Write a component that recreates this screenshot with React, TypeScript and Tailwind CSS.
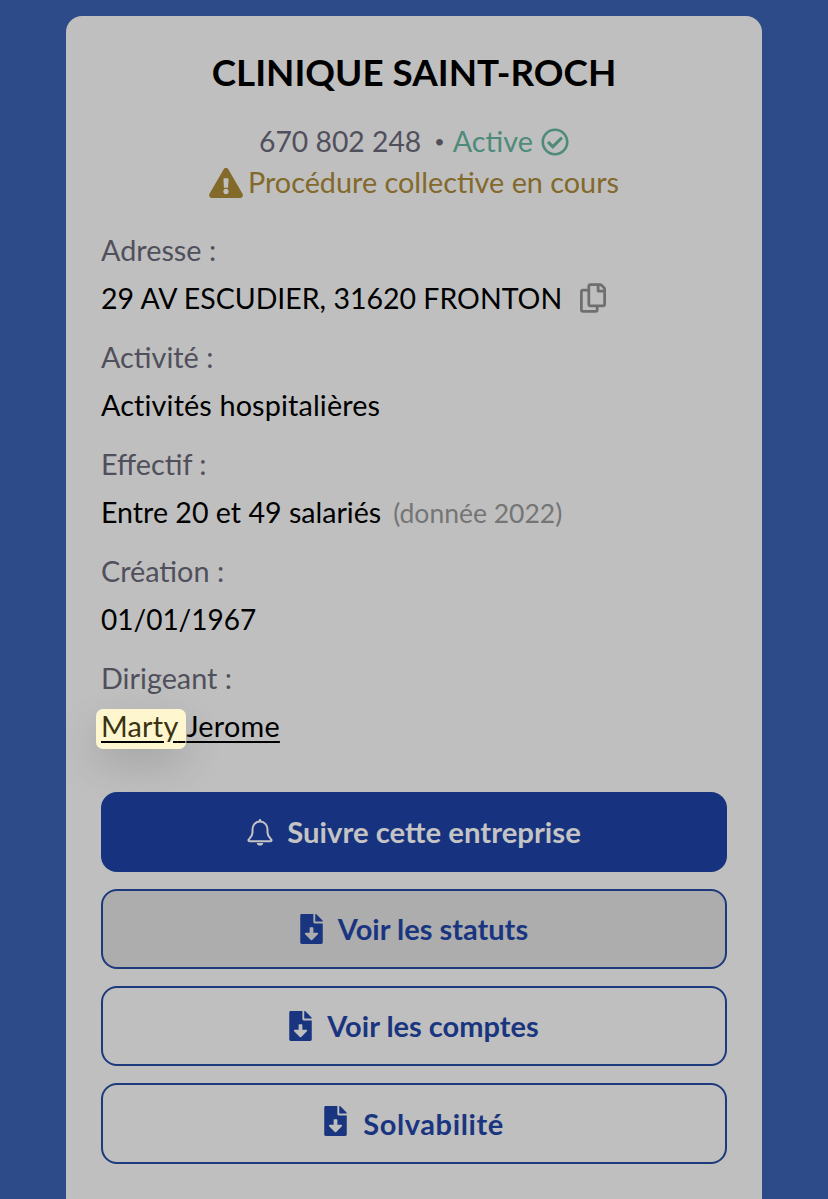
import React from 'react';
import { FaExclamationTriangle, FaFileDownload, FaRegCheckCircle, FaRegCopy } from 'react-icons/fa';

function BellIcon() {
  return (
    <svg viewBox="0 0 26 28" className="h-[28px] w-[26px]" fill="none" stroke="currentColor" strokeWidth="2">
      <circle cx="13" cy="2.2" r="1.2" fill="currentColor" stroke="none" />
      <path d="M13 3.5C8.5 3.5 5.5 7 5.5 11.5V14.5C5.5 18 3.2 19.8 1.8 21.4C1 22.4 1.6 23.3 2.8 23.3H23.2C24.4 23.3 25 22.4 24.2 21.4C22.8 19.8 20.5 18 20.5 14.5V11.5C20.5 7 17.5 3.5 13 3.5Z" strokeLinejoin="round" />
      <path d="M9.8 25H16.2C16.2 26.6 14.8 27.6 13 27.6C11.2 27.6 9.8 26.6 9.8 25Z" fill="currentColor" stroke="none" />
    </svg>
  );
}

function Field({ label, children }: { label: string; children: React.ReactNode }) {
  return (
    <div className="mb-[11px]">
      <p className="h-[48px] text-[28.8px] leading-[48px] text-[#50505c]">{label}</p>
      <div className="h-[48px] text-[28.8px] leading-[48px] text-black">{children}</div>
    </div>
  );
}

function OutlineButton({ label, className, iconClass }: { label: string; className?: string; iconClass?: string }) {
  return (
    <button
      className={`flex h-[80px] w-full items-center justify-center gap-[15px] rounded-[16px] border-2 border-[#1c3a7c] text-[29px] font-bold text-[#1a3580] ${className ?? ''}`}
    >
      <FaFileDownload className={`h-[30px] w-[23px] ${iconClass ?? ''}`} />
      {label}
    </button>
  );
}

export default function App() {
  return (
    <div className="h-[1199px] overflow-hidden bg-[#2d4b88] px-[66px] pt-[16px] font-['Lato',sans-serif]">
      <div className="h-[1230px] rounded-[16px] bg-[#bfbfbf] px-[35px] pt-[29px]">
        <h1 className="text-center text-[36.8px] leading-[54px] font-bold text-black">CLINIQUE SAINT-ROCH</h1>

        <div className="mt-[22px] flex h-[41px] items-center justify-center text-[28.8px] text-[#50505c]">
          <span className="text-[28.3px]">670 802 248</span>
          <span className="mr-[8px] ml-[13px] text-[18px]">•</span>
          <span className="text-[#4e8b7a]">Active</span>
          <FaRegCheckCircle className="ml-[8px] h-[28px] w-[28px] text-[#4e8b7a]" />
        </div>
        <div className="flex h-[41px] items-center justify-center gap-[5px] text-[28.8px] text-[#83692a]">
          <FaExclamationTriangle className="h-[30px] w-[34px]" />
          <span>Procédure collective en cours</span>
        </div>

        <div className="mt-[23px]">
          <Field label="Adresse :">
            <span className="flex items-center text-[28.5px]">
              29 AV ESCUDIER, 31620 FRONTON
              <FaRegCopy className="ml-[18px] h-[30px] w-[26px] text-[#6f6f6f]" />
            </span>
          </Field>
          <Field label="Activité :">
            <span className="tracking-[0.13px]">Activités hospitalières</span>
          </Field>
          <Field label="Effectif :">
            <span className="text-[28.6px]">Entre 20 et 49 salariés</span>
            <span className="ml-[12px] text-[26.5px] text-[#757575]">(donnée 2022)</span>
          </Field>
          <Field label="Création :">
            <span className="text-[28px]">01/01/1967</span>
          </Field>
          <Field label="Dirigeant :">
            <span className="tracking-[0.25px] underline underline-offset-[4px]">
              <span className="-mx-[5px] rounded-[7px] bg-[#fdf6cf] pr-[1px] pb-[6px] pl-[5px] text-[#3a3210] shadow-[0_16px_40px_rgba(0,0,0,0.14)]">
                Marty{' '}
              </span>
              <span className="ml-[5px]">Jerome</span>
            </span>
          </Field>
        </div>

        <div className="mt-[42px] flex flex-col gap-[17px]">
          <button className="flex h-[80px] w-full items-center justify-center gap-[14px] rounded-[16px] bg-[#17337f] text-[29.3px] font-bold text-[#c4c4c4]">
            <BellIcon />
            Suivre cette entreprise
          </button>
          <OutlineButton label="Voir les statuts" className="bg-[#adadad]" />
          <OutlineButton label="Voir les comptes" />
          <OutlineButton label="Solvabilité" className="h-[81px] gap-[16px] tracking-[0.6px]" iconClass="mb-[5px]" />
        </div>
      </div>
    </div>
  );
}
